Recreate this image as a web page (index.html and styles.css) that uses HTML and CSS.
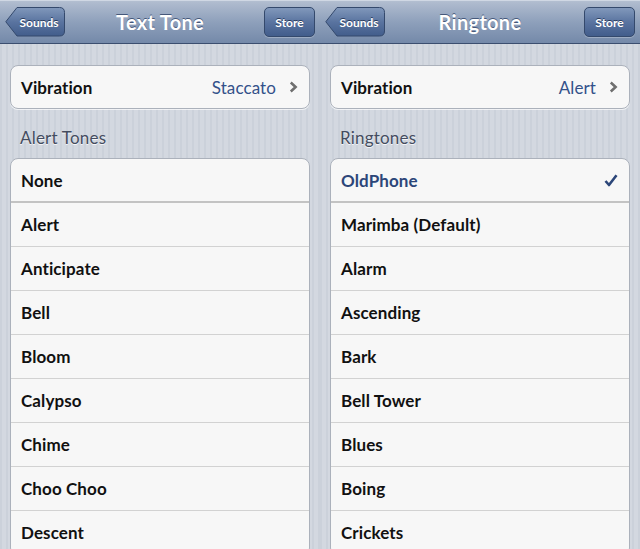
FILE: index.html
```html
<!DOCTYPE html>
<html>
<head>
<meta charset="utf-8">
<link rel="stylesheet" href="styles.css">
</head>
<body>
<div class="screens">
  <section class="phone">
    <header class="navbar">
      <button class="back">
        <svg class="back-shape" width="60" height="30" viewBox="0 0 60 30">
          <defs>
            <linearGradient id="bg1" x1="0" y1="0" x2="0" y2="1">
              <stop offset="0" stop-color="#8198bb"/>
              <stop offset="0.5" stop-color="#5a74a0"/>
              <stop offset="1" stop-color="#425d8b"/>
            </linearGradient>
          </defs>
          <path d="M12 0.5 H54.5 Q59.5 0.5 59.5 5.5 V24 Q59.5 29 54.5 29 H12 L0.8 14.75 Z" fill="url(#bg1)" stroke="#34496c" stroke-width="1"/>
        </svg>
        <span class="btn-label">Sounds</span>
      </button>
      <h1 class="title">Text Tone</h1>
      <button class="store">Store</button>
    </header>
    <main class="content">
      <div class="group">
        <div class="row row-first-last">
          <span class="label">Vibration</span>
          <span class="value">Staccato</span>
          <svg class="chev" width="9" height="12" viewBox="0 0 9 12"><path d="M1.8 1.5 L6.6 6 L1.8 10.5" fill="none" stroke="#6f6f6f" stroke-width="2.6"/></svg>
        </div>
      </div>
      <h2 class="section">Alert Tones</h2>
      <div class="group">
        <div class="row row-top">None</div>
        <div class="row">Alert</div>
        <div class="row">Anticipate</div>
        <div class="row">Bell</div>
        <div class="row">Bloom</div>
        <div class="row">Calypso</div>
        <div class="row">Chime</div>
        <div class="row">Choo Choo</div>
        <div class="row">Descent</div>
      </div>
    </main>
  </section>
  <section class="phone">
    <header class="navbar">
      <button class="back">
        <svg class="back-shape" width="60" height="30" viewBox="0 0 60 30">
          <defs>
            <linearGradient id="bg2" x1="0" y1="0" x2="0" y2="1">
              <stop offset="0" stop-color="#8198bb"/>
              <stop offset="0.5" stop-color="#5a74a0"/>
              <stop offset="1" stop-color="#425d8b"/>
            </linearGradient>
          </defs>
          <path d="M12 0.5 H54.5 Q59.5 0.5 59.5 5.5 V24 Q59.5 29 54.5 29 H12 L0.8 14.75 Z" fill="url(#bg2)" stroke="#34496c" stroke-width="1"/>
        </svg>
        <span class="btn-label">Sounds</span>
      </button>
      <h1 class="title">Ringtone</h1>
      <button class="store">Store</button>
    </header>
    <main class="content">
      <div class="group">
        <div class="row row-first-last">
          <span class="label">Vibration</span>
          <span class="value">Alert</span>
          <svg class="chev" width="9" height="12" viewBox="0 0 9 12"><path d="M1.8 1.5 L6.6 6 L1.8 10.5" fill="none" stroke="#6f6f6f" stroke-width="2.6"/></svg>
        </div>
      </div>
      <h2 class="section">Ringtones</h2>
      <div class="group">
        <div class="row row-top selected">
          <span class="label">OldPhone</span>
          <svg class="check" width="14" height="13" viewBox="0 0 14 13"><path d="M1.5 7 L5 11 L12.5 1.2" fill="none" stroke="#2c4679" stroke-width="2.6" stroke-linejoin="round"/></svg>
        </div>
        <div class="row">Marimba (Default)</div>
        <div class="row">Alarm</div>
        <div class="row">Ascending</div>
        <div class="row">Bark</div>
        <div class="row">Bell Tower</div>
        <div class="row">Blues</div>
        <div class="row">Boing</div>
        <div class="row">Crickets</div>
      </div>
    </main>
  </section>
</div>
</body>
</html>
```
FILE: styles.css
```css
html, body {
  margin: 0;
  padding: 0;
}
body {
  width: 640px;
  height: 549px;
  overflow: hidden;
  font-family: "Lato", "Liberation Sans", sans-serif;
}
.screens {
  display: flex;
  width: 640px;
  height: 549px;
}
.phone {
  width: 320px;
  height: 549px;
  overflow: hidden;
  display: flex;
  flex-direction: column;
  background: repeating-linear-gradient(90deg, #cbd1da 0, #cbd1da 2px, #d3d8e0 2px, #d3d8e0 6px);
}
.navbar {
  height: 43px;
  flex: none;
  position: relative;
  display: flex;
  align-items: center;
  justify-content: space-between;
  padding: 0 5px;
  background: linear-gradient(#b8c3d4 0, #b0bccf 2px, #8ea0bb 22px, #7489a9 43px);
  border-bottom: 1px solid #3b4e6f;
  box-shadow: inset 0 1px 0 #d0d8e4;
}
.back {
  position: relative;
  width: 60px;
  height: 30px;
  padding: 0;
  margin-top: 1px;
  border: 0;
  background: none;
  display: flex;
  align-items: center;
  justify-content: center;
}
.back-shape {
  position: absolute;
  left: 0;
  top: 0;
}
.btn-label {
  position: relative;
  padding-left: 8px;
  font-family: "Lato", sans-serif;
  font-weight: 700;
  font-size: 12px;
  color: #fff;
  text-shadow: 0 -1px 0 #2a3d5e;
}
.title {
  margin: 0;
  position: absolute;
  left: 0;
  right: 0;
  top: 10px;
  text-align: center;
  font-weight: 700;
  font-size: 20px;
  line-height: 24px;
  color: #fff;
  letter-spacing: 0.3px;
  text-shadow: 0 -1px 0 #45587a;
  pointer-events: none;
}
.store {
  width: 51px;
  height: 30px;
  margin-top: 1px;
  padding: 0;
  border: 1px solid #34496c;
  border-radius: 5px;
  background: linear-gradient(#8198bb, #5a74a0 50%, #425d8b);
  font-family: "Lato", sans-serif;
  font-weight: 700;
  font-size: 12px;
  color: #fff;
  text-shadow: 0 -1px 0 #2a3d5e;
  box-shadow: 0 1px 0 rgba(255,255,255,0.25);
}
.content {
  padding: 21px 10px 0;
  display: flex;
  flex-direction: column;
}
.group {
  background: #f7f7f7;
  border: 1px solid #abb1bb;
  border-radius: 8px;
  overflow: hidden;
  box-shadow: 0 1px 0 rgba(255,255,255,0.7);
}
.row {
  flex: none;
  height: 44px;
  box-sizing: border-box;
  border-bottom: 1px solid #d2d2d2;
  display: flex;
  align-items: center;
  padding: 0 11px 0 10px;
  font-weight: 700;
  font-size: 17px;
  color: #111;
  letter-spacing: 0.1px;
}
.row.row-first-last {
  height: 42px;
  border-bottom: 0;
}
.row.row-top {
  height: 44px;
  border-bottom: 2px solid #c3c3c3;
}
.label {
  flex: 1;
}
.value {
  font-weight: 400;
  color: #33518a;
  margin-right: 13px;
}
.selected {
  color: #2c4679;
}
.section {
  margin: 0;
  height: 49px;
  padding: 19px 0 0 10px;
  box-sizing: border-box;
  font-weight: 400;
  font-size: 17px;
  line-height: 20px;
  color: #444c5f;
  letter-spacing: 0.2px;
  text-shadow: 0 1px 0 rgba(255,255,255,0.8);
}
```
